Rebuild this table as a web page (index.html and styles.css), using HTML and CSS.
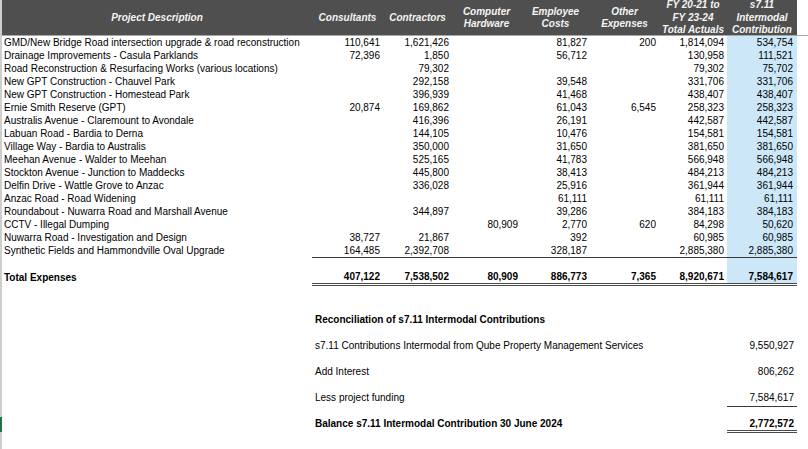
FILE: index.html
```html
<!DOCTYPE html>
<html>
<head>
<meta charset="utf-8">
<link rel="stylesheet" href="styles.css">
</head>
<body>
<div class="sheet">
  <div class="gutter"><span class="gap"></span><span class="sel"></span></div>
  <div class="content">
    <table class="report">
      <colgroup>
        <col class="c-desc"><col class="c-w71"><col class="c-w69"><col class="c-w69"><col class="c-w69"><col class="c-w69"><col class="c-w68"><col class="c-w70"><col class="c-fill">
      </colgroup>
      <thead>
        <tr>
          <th><div class="hd">Project Description</div></th>
          <th><div class="hd">Consultants</div></th>
          <th><div class="hd">Contractors</div></th>
          <th><div class="hd">Computer<br>Hardware</div></th>
          <th><div class="hd">Employee<br>Costs</div></th>
          <th><div class="hd">Other<br>Expenses</div></th>
          <th><div class="hd">FY 20-21 to<br>FY 23-24<br>Total Actuals</div></th>
          <th><div class="hd">s7.11<br>Intermodal<br>Contribution</div></th>
          <th class="fill"><div class="hd"></div></th>
        </tr>
      </thead>
      <tbody>
        <tr><td class="desc">GMD/New Bridge Road intersection upgrade &amp; road reconstruction</td><td class="num">110,641</td><td class="num">1,621,426</td><td class="num"></td><td class="num">81,827</td><td class="num">200</td><td class="num">1,814,094</td><td class="num blue">534,754</td><td></td></tr>
        <tr><td class="desc">Drainage Improvements - Casula Parklands</td><td class="num">72,396</td><td class="num">1,850</td><td class="num"></td><td class="num">56,712</td><td class="num"></td><td class="num">130,958</td><td class="num blue">111,521</td><td></td></tr>
        <tr><td class="desc">Road Reconstruction &amp; Resurfacing Works (various locations)</td><td class="num"></td><td class="num">79,302</td><td class="num"></td><td class="num"></td><td class="num"></td><td class="num">79,302</td><td class="num blue">75,702</td><td></td></tr>
        <tr><td class="desc">New GPT Construction - Chauvel Park</td><td class="num"></td><td class="num">292,158</td><td class="num"></td><td class="num">39,548</td><td class="num"></td><td class="num">331,706</td><td class="num blue">331,706</td><td></td></tr>
        <tr><td class="desc">New GPT Construction - Homestead Park</td><td class="num"></td><td class="num">396,939</td><td class="num"></td><td class="num">41,468</td><td class="num"></td><td class="num">438,407</td><td class="num blue">438,407</td><td></td></tr>
        <tr><td class="desc">Ernie Smith Reserve (GPT)</td><td class="num">20,874</td><td class="num">169,862</td><td class="num"></td><td class="num">61,043</td><td class="num">6,545</td><td class="num">258,323</td><td class="num blue">258,323</td><td></td></tr>
        <tr><td class="desc">Australis Avenue - Claremount to Avondale</td><td class="num"></td><td class="num">416,396</td><td class="num"></td><td class="num">26,191</td><td class="num"></td><td class="num">442,587</td><td class="num blue">442,587</td><td></td></tr>
        <tr><td class="desc">Labuan Road - Bardia to Derna</td><td class="num"></td><td class="num">144,105</td><td class="num"></td><td class="num">10,476</td><td class="num"></td><td class="num">154,581</td><td class="num blue">154,581</td><td></td></tr>
        <tr><td class="desc">Village Way - Bardia to Australis</td><td class="num"></td><td class="num">350,000</td><td class="num"></td><td class="num">31,650</td><td class="num"></td><td class="num">381,650</td><td class="num blue">381,650</td><td></td></tr>
        <tr><td class="desc">Meehan Avenue - Walder to Meehan</td><td class="num"></td><td class="num">525,165</td><td class="num"></td><td class="num">41,783</td><td class="num"></td><td class="num">566,948</td><td class="num blue">566,948</td><td></td></tr>
        <tr><td class="desc">Stockton Avenue - Junction to Maddecks</td><td class="num"></td><td class="num">445,800</td><td class="num"></td><td class="num">38,413</td><td class="num"></td><td class="num">484,213</td><td class="num blue">484,213</td><td></td></tr>
        <tr><td class="desc">Delfin Drive - Wattle Grove to Anzac</td><td class="num"></td><td class="num">336,028</td><td class="num"></td><td class="num">25,916</td><td class="num"></td><td class="num">361,944</td><td class="num blue">361,944</td><td></td></tr>
        <tr><td class="desc">Anzac Road - Road Widening</td><td class="num"></td><td class="num"></td><td class="num"></td><td class="num">61,111</td><td class="num"></td><td class="num">61,111</td><td class="num blue">61,111</td><td></td></tr>
        <tr><td class="desc">Roundabout - Nuwarra Road and Marshall Avenue</td><td class="num"></td><td class="num">344,897</td><td class="num"></td><td class="num">39,286</td><td class="num"></td><td class="num">384,183</td><td class="num blue">384,183</td><td></td></tr>
        <tr><td class="desc">CCTV - Illegal Dumping</td><td class="num"></td><td class="num"></td><td class="num">80,909</td><td class="num">2,770</td><td class="num">620</td><td class="num">84,298</td><td class="num blue">50,620</td><td></td></tr>
        <tr><td class="desc">Nuwarra Road - Investigation and Design</td><td class="num">38,727</td><td class="num">21,867</td><td class="num"></td><td class="num">392</td><td class="num"></td><td class="num">60,985</td><td class="num blue">60,985</td><td></td></tr>
        <tr class="last"><td class="desc">Synthetic Fields and Hammondville Oval Upgrade</td><td class="num">164,485</td><td class="num">2,392,708</td><td class="num"></td><td class="num">328,187</td><td class="num"></td><td class="num">2,885,380</td><td class="num blue">2,885,380</td><td></td></tr>
        <tr class="blank"><td class="desc"></td><td class="num"></td><td class="num"></td><td class="num"></td><td class="num"></td><td class="num"></td><td class="num"></td><td class="num blue"></td><td></td></tr>
        <tr class="total"><td class="desc">Total Expenses</td><td class="num">407,122</td><td class="num">7,538,502</td><td class="num">80,909</td><td class="num">886,773</td><td class="num">7,365</td><td class="num">8,920,671</td><td class="num blue">7,584,617</td><td></td></tr>
      </tbody>
    </table>

    <section class="recon">
      <div class="rrow bold"><span class="label">Reconciliation of s7.11 Intermodal Contributions</span></div>
      <div class="rrow"><span class="label">s7.11 Contributions Intermodal from Qube Property Management Services</span><span class="val">9,550,927</span></div>
      <div class="rrow"><span class="label">Add Interest</span><span class="val">806,262</span></div>
      <div class="rrow"><span class="label">Less project funding</span><span class="val single">7,584,617</span></div>
      <div class="rrow bold"><span class="label">Balance s7.11 Intermodal Contribution 30 June 2024</span><span class="val double">2,772,572</span></div>
    </section>
  </div>
</div>
</body>
</html>
```

FILE: styles.css
```css
html, body {
  margin: 0;
  padding: 0;
  background: #ffffff;
}

body {
  font-family: "Liberation Sans", Arial, sans-serif;
  font-size: 10px;
  color: #000;
  width: 808px;
  height: 449px;
  overflow: hidden;
}

.sheet {
  display: flex;
  height: 449px;
}

.gutter {
  width: 2px;
  flex: none;
  background: #cfcfcf;
  display: flex;
  flex-direction: column;
}

.gutter .gap {
  height: 417px;
  flex: none;
}

.gutter .sel {
  height: 15px;
  background: #217346;
  flex: none;
}

.content {
  flex: 1;
  display: flex;
  flex-direction: column;
}

.report {
  border-collapse: collapse;
  table-layout: fixed;
  width: 806px;
}

.c-desc { width: 310px; }
.c-w71 { width: 71px; }
.c-w69 { width: 69px; }
.c-w68 { width: 68px; }
.c-w70 { width: 70px; }
.c-fill { width: 11px; }

.report th {
  height: 35px;
  padding: 0;
  background: #4f4f4f;
  color: #f4f4f4;
  font-weight: bold;
  font-style: italic;
  text-align: center;
  vertical-align: middle;
  border-bottom: 1px solid #a8a8a8;
}

.report th .hd {
  height: 35px;
  box-sizing: border-box;
  padding-top: 1px;
  display: flex;
  flex-direction: column;
  justify-content: center;
  align-items: center;
  line-height: 12.5px;
  white-space: nowrap;
}

.report th.fill {
  background: #ffffff;
}

.report td {
  height: 13px;
  line-height: 13px;
  padding: 0;
  white-space: nowrap;
  overflow: hidden;
}

.report td.desc {
  padding-left: 2px;
}

.report td.num {
  text-align: right;
  padding-right: 3px;
}

.report td.blue {
  background: #cce8f8;
  padding-right: 4px;
}

.report tr.last td.num {
  border-bottom: 1px solid #3a3a3a;
}

.report tr.blank td {
  height: 12px;
}

.report tr.total td {
  font-weight: bold;
  height: 13px;
}

.report tr.total td.num {
  border-bottom: 3px double #4a4a4a;
}

.recon {
  margin-left: 310px;
  width: 485px;
  margin-top: 27px;
  display: flex;
  flex-direction: column;
  gap: 13px;
}

.rrow {
  display: flex;
  justify-content: space-between;
  align-items: flex-start;
  height: 13px;
  line-height: 13px;
}

.rrow.bold {
  font-weight: bold;
}

.rrow .label {
  padding-left: 3px;
}

.rrow .val {
  width: 70px;
  text-align: right;
  padding-right: 3px;
  box-sizing: border-box;
}

.rrow .val.single {
  border-bottom: 1px solid #3a3a3a;
  height: 16px;
}

.rrow .val.double {
  border-bottom: 3px double #4a4a4a;
  height: 16px;
}
```
